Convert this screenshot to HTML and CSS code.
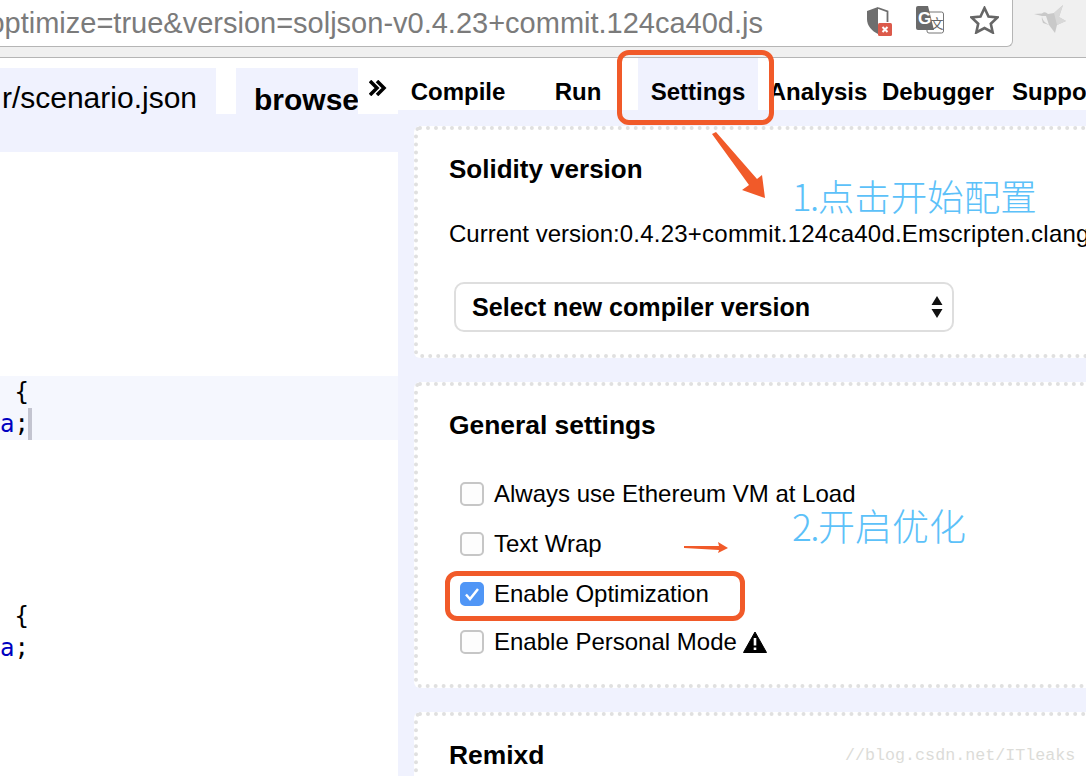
FILE: index.html
```html
<!DOCTYPE html>
<html>

<head>
    <meta charset="UTF-8">
    <meta name="viewport" content="width=device-width, initial-scale=1.0">
    <title>Remix settings</title>
    <link rel="stylesheet" href="styles.css">
</head>

<body>
    <div class="browser">
        <div class="address">
            <div class="url"><span>optimize=true&amp;version=soljson-v0.4.23+commit.124ca40d.js</span></div>
            <svg class="icon-shield" width="25" height="29" viewBox="0 0 25 29">
                <path d="M11 0 L0 4 V12 C0 19 5 24 11 27 Z" fill="#6e6e6e" />
                <path d="M11 1 L20.500 4.500 V15" fill="none" stroke="#6e6e6e" stroke-width="1.800" />
                <rect x="11" y="16" width="14" height="13" rx="1.500" fill="#dc5a4b" />
                <path d="M15.500 20 L20.500 25 M20.500 20 L15.500 25" stroke="#fff" stroke-width="2" />
            </svg>
            <svg class="icon-translate" width="28" height="28" viewBox="0 0 28 28">
                <rect x="11" y="6" width="16.500" height="21" rx="2" fill="#fff" stroke="#777" />
                <path d="M0 2 Q0 0 2 0 H12 L18 24 H2 Q0 24 0 22 Z" fill="#6a6a6a" />
                <text x="2" y="18" class="icon-g">G</text>
                <text x="14.500" y="22" class="icon-wen">文</text>
            </svg>
            <svg class="icon-star" width="29" height="28" viewBox="0 0 29 28">
                <path d="M14.500 2 L18.500 10.500 L27.500 11.500 L20.800 17.800 L22.700 26.500 L14.500 22 L6.300 26.500 L8.200 17.800 L1.500 11.500 L10.500 10.500 Z" fill="none" stroke="#666" stroke-width="2.600" />
            </svg>
        </div>
        <div class="bird">
            <svg width="32" height="30" viewBox="0 0 32 30">
                <path d="M0 9 L8 8.500 Q11 6 14 9 L20 8 L29 0 L25 12 L32 16 L23 20 L21 28 L15 20 L9 18 Q7 14 8 11 Z" fill="#c9c9c9" />
                <path d="M20 8 L29 0 L25 12 L32 16 L23 20 Z" fill="#d8d8d8" />
                <path d="M8 11 Q8 15 12 18 L15 20 L12 11 Z" fill="#efefef" />
            </svg>
        </div>
    </div>

    <div class="main">
        <div class="editor">
            <div class="file-tabs">
                <div class="file-tab file-name"><span>r/scenario.json</span></div>
                <div class="file-tab file-browse">browse</div>
                <svg class="more" width="18" height="16" viewBox="0 0 18 16">
                    <path d="M1 1 L8 8 L1 15 M8 1 L15 8 L8 15" fill="none" stroke="#000" stroke-width="3.500" />
                </svg>
            </div>
            <div class="file-band"></div>
            <div class="code">
                <div class="line"></div>
                <div class="line"></div>
                <div class="line"></div>
                <div class="line"></div>
                <div class="line"></div>
                <div class="line"></div>
                <div class="line"></div>
                <div class="line hl"> {</div>
                <div class="line hl"><span class="kw">a</span>;<span class="cursor"></span></div>
                <div class="line"></div>
                <div class="line"></div>
                <div class="line"></div>
                <div class="line"></div>
                <div class="line"></div>
                <div class="line"> {</div>
                <div class="line"><span class="kw">a</span>;</div>
            </div>
        </div>

        <div class="panel">
            <div class="tabs">
                <div class="tab">Compile</div>
                <div class="tab">Run</div>
                <div class="tab active">Settings</div>
                <div class="tab">Analysis</div>
                <div class="tab">Debugger</div>
                <div class="tab">Support</div>
            </div>
            <div class="cards">
                <div class="card card-version">
                    <h2>Solidity version</h2>
                    <p class="current">Current version:<span class="version">0.4.23+commit.124ca40d.Emscripten.clang</span></p>
                    <div class="select">
                        <span>Select new compiler version</span>
                        <svg width="12" height="24" viewBox="0 0 12 24">
                            <path d="M6 1 L11.500 10 H0.500 Z M6 23 L11.500 14 H0.500 Z" fill="#111" />
                        </svg>
                    </div>
                </div>
                <div class="card card-general">
                    <h2>General settings</h2>
                    <div class="options">
                        <label class="option"><span class="box"></span>Always use Ethereum VM at Load</label>
                        <label class="option"><span class="box"></span>Text Wrap</label>
                        <label class="option"><span class="box checked"><svg width="16" height="14" viewBox="0 0 16 14"><path d="M2 7.500 L6 12 L14 2" fill="none" stroke="#fff" stroke-width="2.500" /></svg></span>Enable Optimization</label>
                        <label class="option personal"><span class="box"></span>Enable Personal Mode
                            <svg class="warn" width="24" height="22" viewBox="0 0 24 22">
                                <path d="M12 1 L23.500 21.500 H0.500 Z" fill="#000" stroke="#000" stroke-linejoin="round" />
                                <path d="M12 7 V14.500 M12 16.500 V19" stroke="#fff" stroke-width="2.600" />
                            </svg>
                        </label>
                    </div>
                </div>
                <div class="card card-remixd">
                    <h2>Remixd</h2>
                </div>
            </div>
        </div>
    </div>

    <!-- screenshot annotations -->
    <div class="mark mark-settings"></div>
    <div class="mark mark-optimize"></div>
    <svg class="arrows" width="1086" height="776" viewBox="0 0 1086 776">
        <polygon points="712,134 716,132 757,179 762,175 765,198 742,190 749,185" fill="#f15a29" />
        <polygon points="684,546 719,546 718,542 728,548 718,553 719,550 684,548" fill="#f15a29" />
    </svg>
    <div class="note note-one"><span class="num">1.</span>点击开始配置</div>
    <div class="note note-two"><span class="num">2.</span>开启优化</div>
    <div class="watermark">//blog.csdn.net/ITleaks</div>
</body>

</html>
```

FILE: styles.css
```css
html,
body {
    margin: 0;
    height: 776px;
    overflow: hidden;
}

body {
    position: relative;
    font-family: "Liberation Sans", Arial, sans-serif;
    color: #000;
    background-color: white;
}

.browser {
    display: flex;
    height: 57px;
    background-color: #f0f0f0;
    border-bottom: 1px solid #b5b5b5;
}

.address {
    display: flex;
    align-items: flex-start;
    box-sizing: border-box;
    width: 1013px;
    height: 47px;
    background-color: white;
    border-right: 1px solid #b5b5b5;
    border-bottom: 1px solid #b5b5b5;
    border-bottom-right-radius: 6px;
}

.url {
    display: flex;
    justify-content: flex-end;
    flex: none;
    width: 763px;
    overflow: hidden;
    font-size: 29px;
    line-height: 46px;
    color: #7b7b7b;
    white-space: nowrap;
}

.url span {
    flex: none;
}

.icon-shield {
    margin: 7px 0 0 104px;
}

.icon-translate {
    margin: 6px 0 0 24px;
}

.icon-star {
    margin: 6px 0 0 26px;
}

.icon-g {
    font-size: 17px;
    font-weight: bold;
    fill: #fff;
}

.icon-wen {
    font-family: "Noto Sans CJK SC", sans-serif;
    font-size: 13px;
    fill: #666;
}

.bird {
    padding: 5px 0 0 21px;
}

.main {
    display: flex;
    height: 718px;
}

.editor {
    flex: none;
    width: 398px;
    overflow: hidden;
}

.file-tabs {
    display: flex;
    gap: 20px;
    height: 46px;
    margin-top: 10px;
}

.file-tab {
    overflow: hidden;
    height: 46px;
    line-height: 60px;
    font-size: 30px;
    white-space: nowrap;
    background-color: #f0f2fe;
}

.file-name {
    display: flex;
    justify-content: flex-end;
    box-sizing: border-box;
    width: 216px;
    padding-right: 19px;
}

.file-name span {
    flex: none;
}

.file-browse {
    box-sizing: border-box;
    width: 122px;
    padding-left: 18px;
    line-height: 64px;
    font-weight: bold;
}

.more {
    margin: 12px 0 0 -9px;
}

.file-band {
    height: 38px;
    background-color: #f0f2fe;
}

.code {
    font-family: "DejaVu Sans Mono", monospace;
    font-size: 24px;
}

.line {
    position: relative;
    height: 32px;
    line-height: 32px;
    white-space: pre;
}

.line.hl {
    background-color: #f5f7fe;
}

.kw {
    color: #0000c0;
}

.cursor {
    position: absolute;
    top: 0;
    left: 28px;
    width: 4px;
    height: 32px;
    background-color: #c3c4d0;
}

.panel {
    flex: 1;
    min-width: 0;
    overflow: hidden;
    background-color: #f0f2fe;
}

.tabs {
    display: flex;
    height: 52px;
    background-color: white;
}

.tab {
    flex: none;
    width: 120px;
    padding-top: 20px;
    font-size: 24px;
    line-height: 28px;
    font-weight: bold;
    text-align: center;
}

.tab.active {
    background-color: #f0f2fe;
}

.cards {
    display: flex;
    flex-direction: column;
    gap: 24px;
    padding: 16px 0 0 16px;
    margin-right: -12px;
}

.card {
    box-sizing: border-box;
    padding: 0 0 0 31px;
    background-color: white;
    border: 4px dotted #e0e0e0;
    border-radius: 6px;
}

.card h2 {
    margin: 0;
    font-size: 26.400px;
    line-height: 32px;
}

.card-version h2 {
    font-size: 26px;
}

.card-version {
    height: 232px;
    padding-top: 23px;
}

.current {
    margin: 33px 0 0;
    font-size: 24px;
    line-height: 32px;
    white-space: nowrap;
}

.version {
    letter-spacing: 0.230px;
}

.select {
    display: flex;
    align-items: center;
    justify-content: space-between;
    box-sizing: border-box;
    width: 500px;
    height: 50px;
    margin: 32px 0 0 5px;
    padding: 0 9px 0 16px;
    font-size: 25.150px;
    font-weight: bold;
    border: 2px solid #dedede;
    border-radius: 10px;
}

.card-general {
    height: 306px;
    padding-top: 23px;
}

.options {
    display: flex;
    flex-direction: column;
    margin-top: 28px;
}

.option {
    display: flex;
    align-items: center;
    height: 50px;
    font-size: 24px;
    white-space: nowrap;
}

.option.personal {
    height: 46px;
}

.box {
    display: flex;
    align-items: center;
    justify-content: center;
    box-sizing: border-box;
    flex: none;
    width: 24px;
    height: 24px;
    margin: 0 10px 0 11px;
    background-color: #fdfdfd;
    border: 2px solid #c6c6c6;
    border-radius: 5px;
}

.box.checked {
    background-color: #5096f6;
    border-color: #5096f6;
}

.warn {
    margin-left: 6px;
}

.card-remixd {
    height: 120px;
    padding-top: 23px;
}

.mark {
    position: absolute;
    box-sizing: border-box;
    border: 5px solid #f15a29;
    border-radius: 12px;
}

.mark-settings {
    top: 50px;
    left: 617px;
    width: 157px;
    height: 75px;
}

.mark-optimize {
    top: 571px;
    left: 445px;
    width: 300px;
    height: 50px;
}

.arrows {
    position: absolute;
    top: 0;
    left: 0;
}

.note {
    position: absolute;
    font-family: "Noto Sans CJK SC", "Liberation Sans", sans-serif;
    font-size: 36.500px;
    font-weight: 300;
    line-height: 44px;
    color: #5cc1f9;
    white-space: nowrap;
}

.num {
    letter-spacing: -1.500px;
}

.note-one {
    top: 174px;
    left: 792px;
}

.note-two {
    top: 503px;
    left: 792px;
    font-size: 37px;
}

.watermark {
    position: absolute;
    top: 745px;
    left: 845px;
    font-family: "Liberation Mono", monospace;
    font-size: 16.700px;
    line-height: 22px;
    color: #dcdcd8;
    white-space: nowrap;
}
```
